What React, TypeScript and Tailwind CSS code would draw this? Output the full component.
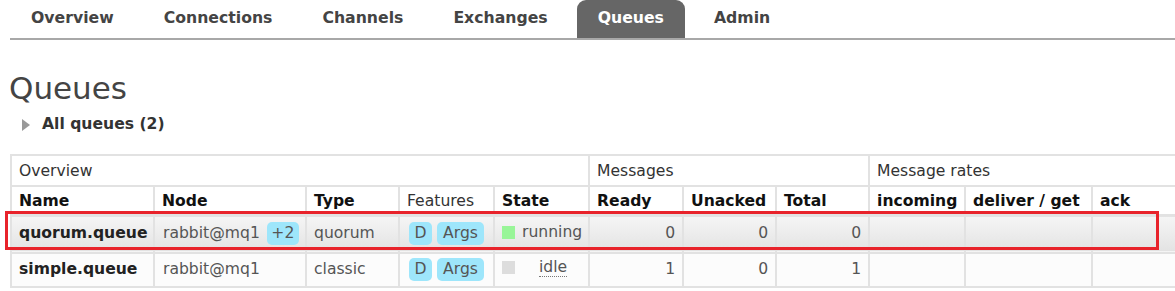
const tabs = ['Overview', 'Connections', 'Channels', 'Exchanges', 'Queues', 'Admin'];

function Badge({ children, w }: { children: string; w: string }) {
  return (
    <span className={`inline-flex h-[23px] ${w} items-center justify-center rounded-[5px] bg-[#9ee6fb] text-[#555]`}>
      {children}
    </span>
  );
}

export default function App() {
  const font = { fontFamily: '"DejaVu Sans", Verdana, sans-serif' };
  return (
    <div className="relative h-[291px] w-[1175px] overflow-hidden bg-white text-[15.6px]" style={font}>
      <nav className="ml-[10px] flex h-[40px] gap-[8px] border-b-2 border-[#a8a8a8] text-[15.7px]">
        {tabs.map((t) => (
          <div
            key={t}
            className={`flex items-center rounded-t-[9px] px-[21px] pb-[3px] font-bold ${
              t === 'Queues' ? 'bg-[#666] text-white' : 'text-[#444]'
            }`}
          >
            {t}
          </div>
        ))}
      </nav>

      <h1 className="ml-[9px] mt-[29px] text-[31px] leading-[38px] text-[#444]">Queues</h1>
      <div className="ml-[22px] mt-[6px] flex items-center gap-[12px] font-bold text-[#333]">
        <span className="h-0 w-0 border-y-[6px] border-l-[8px] border-y-transparent border-l-[#999]" />
        <span>All queues (2)</span>
      </div>

      <table className="ml-[10px] mt-[18px] w-[1180px] table-fixed border-collapse border-2 border-[#e2e2e2] text-left">
        <colgroup>
          <col className="w-[143px]" />
          <col className="w-[152px]" />
          <col className="w-[93px]" />
          <col className="w-[95px]" />
          <col className="w-[95px]" />
          <col className="w-[94px]" />
          <col className="w-[93px]" />
          <col className="w-[93px]" />
          <col className="w-[96px]" />
          <col className="w-[127px]" />
          <col />
        </colgroup>
        <thead>
          <tr className="h-[31px] text-[#333]">
            <th colSpan={5} className="border-b-2 border-[#e2e2e2] px-[7px] pt-[2px] font-normal">Overview</th>
            <th colSpan={3} className="border-b-2 border-l-2 border-[#e2e2e2] px-[7px] pt-[2px] font-normal">Messages</th>
            <th colSpan={3} className="border-b-2 border-l-2 border-[#e2e2e2] px-[7px] pt-[2px] font-normal">Message rates</th>
          </tr>
          <tr className="h-[28px] text-[#111]">
            <th className="px-[7px] pt-[3px] font-bold">Name</th>
            <th className="border-l-2 border-[#e2e2e2] px-[7px] pt-[3px] font-bold">Node</th>
            <th className="border-l-2 border-[#e2e2e2] px-[7px] pt-[3px] font-bold">Type</th>
            <th className="border-l-2 border-[#e2e2e2] px-[7px] pt-[3px] font-normal text-[#333]">Features</th>
            <th className="border-l-2 border-[#e2e2e2] px-[7px] pt-[3px] font-bold">State</th>
            <th className="border-l-2 border-[#e2e2e2] px-[7px] pt-[3px] font-bold">Ready</th>
            <th className="border-l-2 border-[#e2e2e2] px-[7px] pt-[3px] font-bold">Unacked</th>
            <th className="border-l-2 border-[#e2e2e2] px-[7px] pt-[3px] font-bold">Total</th>
            <th className="border-l-2 border-[#e2e2e2] px-[7px] pt-[3px] font-bold">incoming</th>
            <th className="border-l-2 border-[#e2e2e2] px-[7px] pt-[3px] font-bold">deliver / get</th>
            <th className="border-l-2 border-[#e2e2e2] px-[7px] pt-[3px] font-bold">ack</th>
          </tr>
        </thead>
        <tbody className="text-[#555]">
          <tr className="h-[38px] border-y-2 border-[#e2e2e2] bg-gradient-to-b from-[#f5f5f5] to-[#e3e3e3]">
            <td className="px-[7px] font-bold text-[#222]">quorum.queue</td>
            <td className="border-l-2 border-[#e2e2e2] px-[8px]">
              <span className="inline-flex items-center gap-[7px]">
                rabbit@mq1 <Badge w="w-[32px]">+2</Badge>
              </span>
            </td>
            <td className="border-l-2 border-[#e2e2e2] px-[7px]">quorum</td>
            <td className="border-l-2 border-[#e2e2e2] px-[9px]">
              <span className="inline-flex gap-[5px]">
                <Badge w="w-[23px]">D</Badge>
                <Badge w="w-[47px]">Args</Badge>
              </span>
            </td>
            <td className="border-l-2 border-[#e2e2e2] px-[7px]">
              <span className="inline-flex items-center gap-[7px]">
                <span className="h-[13px] w-[13px] bg-[#98f598]" />
                running
              </span>
            </td>
            <td className="border-l-2 border-[#e2e2e2] px-[7px] text-right">0</td>
            <td className="border-l-2 border-[#e2e2e2] px-[7px] text-right">0</td>
            <td className="border-l-2 border-[#e2e2e2] px-[7px] text-right">0</td>
            <td className="border-l-2 border-[#e2e2e2]" />
            <td className="border-l-2 border-[#e2e2e2]" />
            <td className="border-l-2 border-[#e2e2e2]" />
          </tr>
          <tr className="h-[34px] border-b-2 border-[#e2e2e2] bg-[#fcfcfc]">
            <td className="px-[7px] font-bold text-[#222]">simple.queue</td>
            <td className="border-l-2 border-[#e2e2e2] px-[8px]">rabbit@mq1</td>
            <td className="border-l-2 border-[#e2e2e2] px-[7px]">classic</td>
            <td className="border-l-2 border-[#e2e2e2] px-[9px]">
              <span className="inline-flex gap-[5px]">
                <Badge w="w-[23px]">D</Badge>
                <Badge w="w-[47px]">Args</Badge>
              </span>
            </td>
            <td className="border-l-2 border-[#e2e2e2] px-[7px]">
              <span className="inline-flex items-center">
                <span className="h-[13px] w-[13px] bg-[#dddddd]" />
                <span className="ml-[24px] border-b border-dotted border-[#777] leading-[17px]">idle</span>
              </span>
            </td>
            <td className="border-l-2 border-[#e2e2e2] px-[7px] text-right">1</td>
            <td className="border-l-2 border-[#e2e2e2] px-[7px] text-right">0</td>
            <td className="border-l-2 border-[#e2e2e2] px-[7px] text-right">1</td>
            <td className="border-l-2 border-[#e2e2e2]" />
            <td className="border-l-2 border-[#e2e2e2]" />
            <td className="border-l-2 border-[#e2e2e2]" />
          </tr>
        </tbody>
      </table>

      {/* annotation box over the first row */}
      <div className="pointer-events-none absolute left-[5px] top-[211px] h-[39px] w-[1154px] border-[3px] border-[#e8232b]" />
    </div>
  );
}
